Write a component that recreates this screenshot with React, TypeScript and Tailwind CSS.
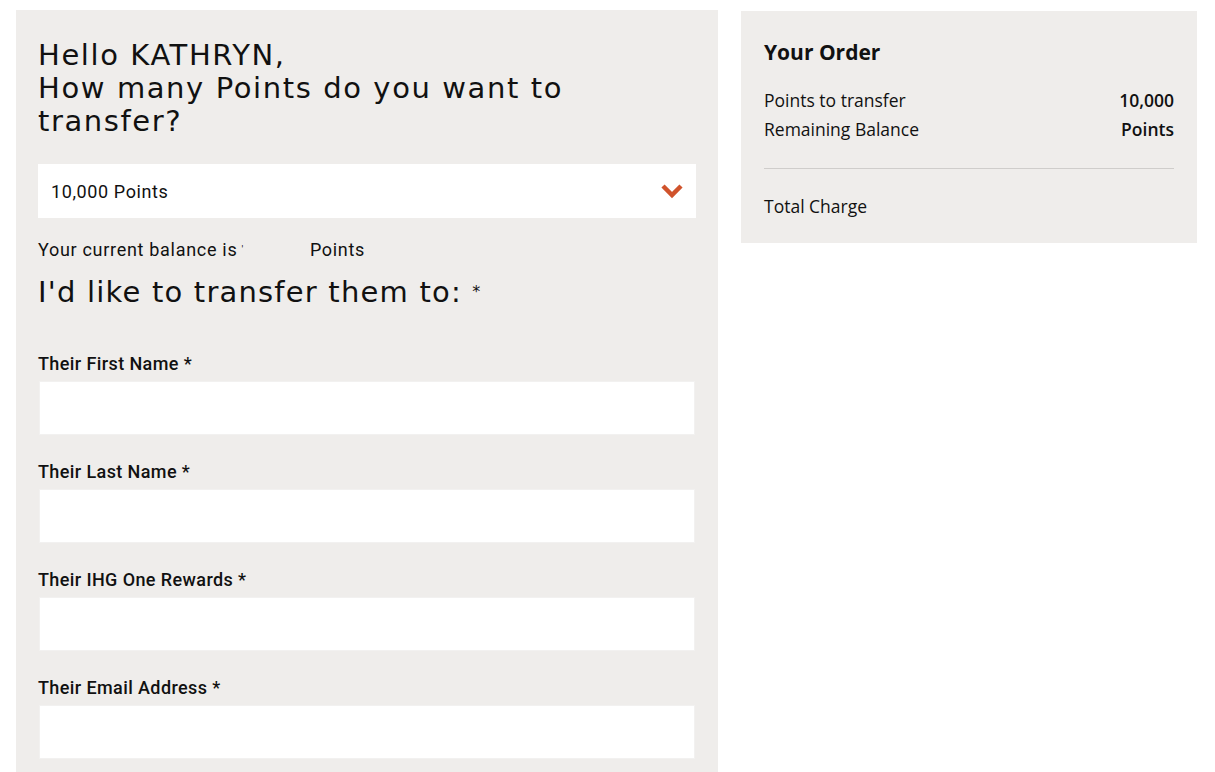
import { useState } from "react"

const heading = { fontFamily: '"DejaVu Sans", sans-serif' }
const narrow = { fontFamily: 'Roboto, "Liberation Sans", sans-serif' }
const body = { fontFamily: '"Open Sans", Lato, sans-serif' }

const fields = ["Their First Name", "Their Last Name", "Their IHG One Rewards", "Their Email Address"]

function Chevron() {
  return (
    <svg width="24" height="16" viewBox="0 0 24 16" className="shrink-0">
      <polyline points="3,3 12,12 21,3" fill="none" stroke="#d0532c" strokeWidth="4.5" />
    </svg>
  )
}

export default function App() {
  const [values, setValues] = useState<Record<string, string>>({})

  return (
    <div className="flex min-h-[772px] items-start gap-[23px] bg-white pl-4 pt-[10px] text-[#111]">
      {/* transfer form */}
      <div className="w-[702px] bg-[#efedeb] px-[22px] pb-10 pt-[29px]">
        <h1 className="w-[600px] text-[29px] leading-[33px] tracking-[1.6px]" style={heading}>
          Hello KATHRYN,
          <br />
          How many Points do you want to transfer?
        </h1>

        <div className="mt-[26px] flex h-[54px] items-center justify-between bg-white pl-[13px] pr-[12px]" style={narrow}>
          <span className="text-[18px] tracking-[0.6px]">10,000 Points</span>
          <Chevron />
        </div>

        <p className="mt-[19px] text-[18px] leading-[26px] tracking-[0.7px]" style={narrow}>
          Your current balance is<span className="ml-[4px] align-top text-[10px]">'</span>
          <span className="ml-[66px]">Points</span>
        </p>

        <h2 className="mt-[12px] text-[29px] leading-[34px] tracking-[1.2px]" style={heading}>
          I'd like to transfer them to: <span className="align-top text-[16px]">*</span>
        </h2>

        <div className="mt-[45px] flex flex-col gap-[27px]">
          {fields.map((f) => (
            <label key={f} className="flex flex-col" style={narrow}>
              <span className="text-[18px] font-medium leading-[20px] tracking-[0.4px]">{f} *</span>
              <input
                value={values[f] ?? ""}
                onChange={(e) => setValues({ ...values, [f]: e.target.value })}
                className="mt-[7px] ml-px h-[54px] w-[656px] border border-[#f2f1f0] bg-white px-3 outline-none"
              />
            </label>
          ))}
        </div>
      </div>

      {/* order summary */}
      <div className="mt-px w-[456px] bg-[#efedeb] px-[23px] pb-[25px] pt-[27px]" style={body}>
        <h3 className="text-[21px] font-bold leading-[28px]">Your Order</h3>
        <div className="mt-[20px] flex justify-between text-[17.5px] leading-[29px]">
          <span>Points to transfer</span>
          <span className="font-semibold">10,000</span>
        </div>
        <div className="flex justify-between text-[17.5px] leading-[29px]">
          <span>Remaining Balance</span>
          <span className="font-semibold">Points</span>
        </div>
        <div className="mt-[24px] border-t border-[#cfcdcb]" />
        <div className="mt-[25px] text-[17.5px] leading-[24px]">Total Charge</div>
      </div>
    </div>
  )
}
